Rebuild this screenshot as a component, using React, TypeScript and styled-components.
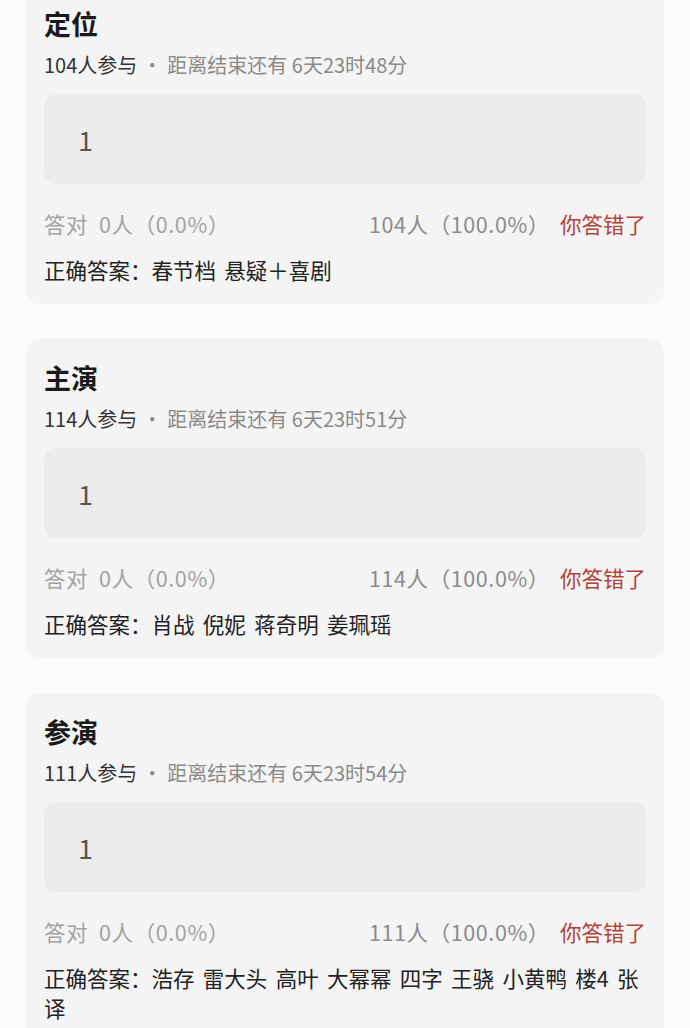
import React from 'react';
import styled, { createGlobalStyle } from 'styled-components';

const GlobalStyle = createGlobalStyle`
  html, body {
    margin: 0;
    padding: 0;
    background: #fbfbfb;
  }
  body {
    font-family: 'Noto Sans CJK SC', 'Noto Sans', sans-serif;
    -webkit-font-smoothing: antialiased;
  }
`;

const Feed = styled.div`
  display: flex;
  flex-direction: column;
  gap: 35px;
  padding: 0 26px 40px;
  margin-top: -15px;
`;

const Card = styled.section`
  background: #f4f4f4;
  border-radius: 14px;
  padding: 22px 18px 19px;
`;

const Title = styled.h2`
  margin: 0;
  font-size: 27px;
  line-height: 34px;
  font-weight: 700;
  color: #1a1a1a;
`;

const Meta = styled.div`
  margin-top: 10px;
  font-size: 20px;
  line-height: 28px;
  color: #8a8a8a;
  white-space: nowrap;
`;

const Count = styled.span`
  color: #333;
`;

const Dot = styled.span`
  margin: 0 5px;
`;

const AnswerBox = styled.div`
  margin-top: 15px;
  height: 90px;
  border-radius: 12px;
  background: #ececec;
  display: flex;
  align-items: center;
  padding: 0 34px;
  font-size: 27px;
  color: #555;
`;

const StatsRow = styled.div`
  margin-top: 25px;
  display: flex;
  justify-content: space-between;
  align-items: center;
  font-size: 21.5px;
  line-height: 30px;
  color: #9a9a9a;
`;

const StatGroup = styled.div`
  display: flex;
  align-items: center;
  gap: 10px;
`;

const Tally = styled.span<{ dim?: boolean }>`
  color: ${p => (p.dim ? '#a3a3a3' : '#8c8c8c')};
  letter-spacing: 0.6px;
  white-space: pre;
`;

const Verdict = styled.span`
  color: #b3433a;
`;

const Solution = styled.div`
  margin-top: 16px;
  font-size: 21.5px;
  line-height: 30px;
  color: #222;
  word-spacing: 3.5px;
`;

interface Question {
  title: string;
  joined: number;
  remain: string;
  answer: string;
}

const questions: Question[] = [
  { title: '定位', joined: 104, remain: '6天23时48分', answer: '春节档 悬疑＋喜剧' },
  { title: '主演', joined: 114, remain: '6天23时51分', answer: '肖战 倪妮 蒋奇明 姜珮瑶' },
  { title: '参演', joined: 111, remain: '6天23时54分', answer: '浩存 雷大头 高叶 大幂幂 四字 王骁 小黄鸭 楼4 张译' },
];

const QuestionCard: React.FC<{ q: Question }> = ({ q }) => (
  <Card>
    <Title>{q.title}</Title>
    <Meta>
      <Count>{q.joined}人参与</Count>
      <Dot>·</Dot>
      距离结束还有 {q.remain}
    </Meta>
    <AnswerBox>1</AnswerBox>
    <StatsRow>
      <Tally dim>答对  0人（0.0%）</Tally>
      <StatGroup>
        <Tally>{q.joined}人（100.0%）</Tally>
        <Verdict>你答错了</Verdict>
      </StatGroup>
    </StatsRow>
    <Solution>正确答案：{q.answer}</Solution>
  </Card>
);

const App: React.FC = () => (
  <>
    <GlobalStyle />
    <Feed>
      {questions.map(q => (
        <QuestionCard key={q.title} q={q} />
      ))}
    </Feed>
  </>
);

export default App;
